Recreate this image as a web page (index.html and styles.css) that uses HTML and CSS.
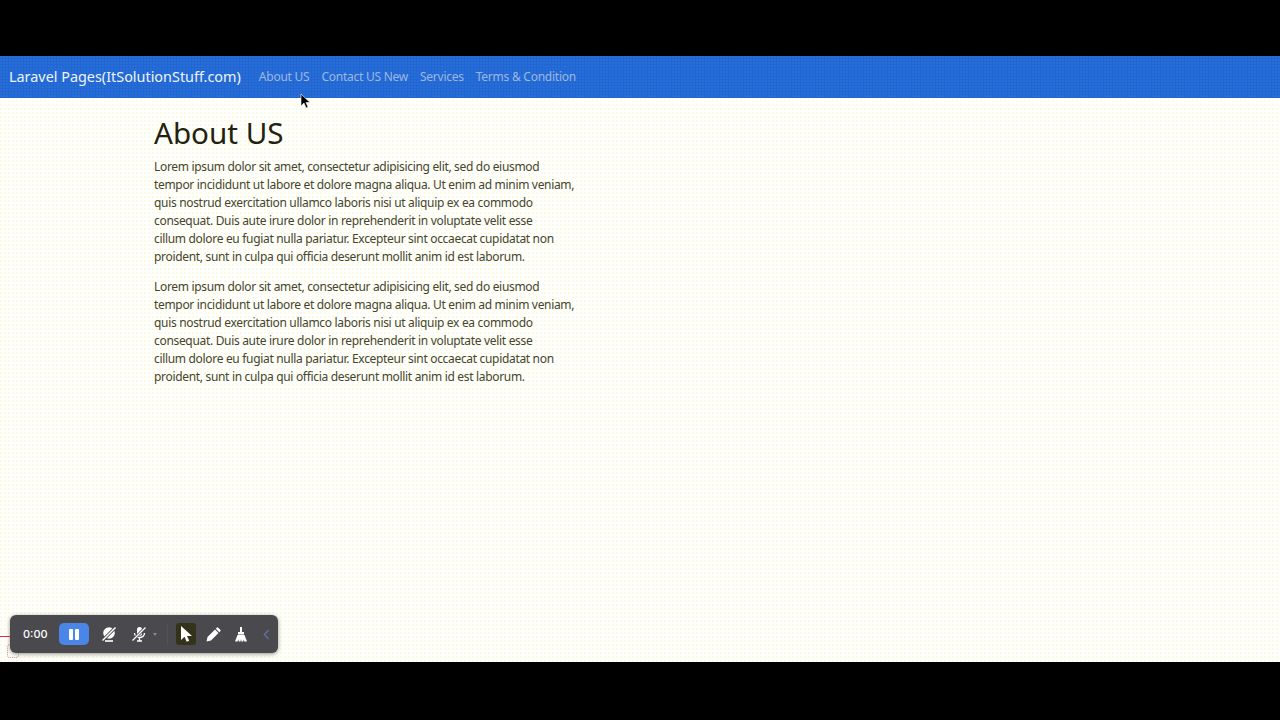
FILE: index.html
```html
<!DOCTYPE html>
<html lang="en">
<head>
  <meta charset="UTF-8" />
  <title>About US</title>
  <link rel="stylesheet" href="styles.css">
</head>
<body>
  <div class="screen">
    <nav class="navbar">
      <a class="brand" href="#">Laravel Pages(ItSolutionStuff.com)</a>
      <a class="nav-link" href="#">About US</a>
      <a class="nav-link" href="#">Contact US New</a>
      <a class="nav-link" href="#">Services</a>
      <a class="nav-link" href="#">Terms &amp; Condition</a>
    </nav>
    <svg class="cursor" width="12" height="16" viewBox="0 0 12 16">
      <path d="M1 1v12l3-3 2 5 2-1-2-4.500h4z" fill="#000" stroke="#fff" stroke-width="0.6"/>
    </svg>
    <main class="content">
      <h1>About US</h1>
      <p>Lorem ipsum dolor sit amet, consectetur adipisicing elit, sed do eiusmod<br>tempor incididunt ut labore et dolore magna aliqua. Ut enim ad minim veniam,<br>quis nostrud exercitation ullamco laboris nisi ut aliquip ex ea commodo<br>consequat. Duis aute irure dolor in reprehenderit in voluptate velit esse<br>cillum dolore eu fugiat nulla pariatur. Excepteur sint occaecat cupidatat non<br>proident, sunt in culpa qui officia deserunt mollit anim id est laborum.</p>
      <p>Lorem ipsum dolor sit amet, consectetur adipisicing elit, sed do eiusmod<br>tempor incididunt ut labore et dolore magna aliqua. Ut enim ad minim veniam,<br>quis nostrud exercitation ullamco laboris nisi ut aliquip ex ea commodo<br>consequat. Duis aute irure dolor in reprehenderit in voluptate velit esse<br>cillum dolore eu fugiat nulla pariatur. Excepteur sint occaecat cupidatat non<br>proident, sunt in culpa qui officia deserunt mollit anim id est laborum.</p>
    </main>
    <div class="rec-line"></div>
    <div class="rec-mark"></div>
    <div class="recorder">
      <span class="rec-time">0:00</span>
      <button class="rec-pause"><span></span><span></span></button>
      <svg class="rec-icon cam" width="16" height="16" viewBox="0 0 16 16">
        <circle cx="8" cy="7" r="5.800" fill="#fff"/>
        <path d="M4 15h8" stroke="#fff" stroke-width="1.600"/>
        <path d="M1 15L15 1" stroke="#4a4a4e" stroke-width="3.200"/>
        <path d="M1.500 14.500L14.500 1.500" stroke="#fff" stroke-width="1.400"/>
      </svg>
      <svg class="rec-icon mic" width="16" height="16" viewBox="0 0 16 16">
        <rect x="6" y="1" width="5" height="9" rx="2.500" fill="#fff"/>
        <path d="M3.500 7c0 6 10 6 10 0M8.500 12v3M6 15h5" fill="none" stroke="#fff" stroke-width="1.400"/>
        <path d="M1.500 14.500L14.500 1.500" stroke="#4a4a4e" stroke-width="3"/>
        <path d="M1.500 14.500L14.500 1.500" stroke="#fff" stroke-width="1.300"/>
      </svg>
      <span class="rec-caret"></span>
      <span class="rec-sep"></span>
      <span class="rec-tool active">
        <svg width="13" height="16" viewBox="0 0 13 16"><path d="M1 0v14l3.500-3.200 2.200 5 2.500-1-2.200-4.800H12z" fill="#fff"/></svg>
      </span>
      <svg class="rec-icon pen" width="15" height="15" viewBox="0 0 15 15">
        <path d="M0.500 14.500l1-4.500 7.500-7.500 3.500 3.500-7.500 7.500zM9.800 1.700l1-1a1 1 0 0 1 1.400 0l2.100 2.100a1 1 0 0 1 0 1.400l-1 1z" fill="#fff"/>
      </svg>
      <svg class="rec-icon broom" width="14" height="15" viewBox="0 0 14 15">
        <path d="M6 0h2v5H6zM4 5h6v2.500H4zM3.500 8h7l2.500 6.500h-2.500l-1-2-.200 2H7.500L7 12l-.500 2.500H4.800l-.300-2-1 2H1z" fill="#fff"/>
      </svg>
      <svg class="rec-back" width="7" height="11" viewBox="0 0 7 11">
        <path d="M5.500 1L1.500 5.500 5.500 10" fill="none" stroke="#5f6b8f" stroke-width="1.800"/>
      </svg>
    </div>
  </div>
</body>
</html>
```
FILE: styles.css
```css
html, body {
  margin: 0;
  height: 100%;
  background: #000;
  overflow: hidden;
}
.screen {
  position: relative;
  display: flex;
  flex-direction: column;
  margin-top: 56px;
  height: 606px;
  background-color: #fffffd;
  background-image: radial-gradient(circle at 1px 1px, #fbfbe6 1px, transparent 1px);
  background-size: 4px 4px;
  font-family: 'Noto Sans', sans-serif;
}
.navbar {
  display: flex;
  align-items: center;
  height: 42px;
  padding: 0 0 2px 9px;
  box-sizing: border-box;
  background-color: #1f66d8;
  background-image: radial-gradient(circle at 1px 1px, #2a6fd0 1px, transparent 1px);
  background-size: 3px 3px;
}
.navbar a {
  text-decoration: none;
}
.brand {
  color: #eef2fa;
  font-size: 14.400px;
  margin-right: 12px;
}
.nav-link {
  color: #9db7e2;
  font-size: 12px;
  letter-spacing: -0.25px;
  padding: 0 6px;
}
.cursor {
  position: absolute;
  left: 300px;
  top: 37px;
}
.content {
  padding: 18px 0 0 154px;
  color: #45452c;
}
.content h1 {
  margin: 0 0 8px;
  font-size: 29.600px;
  font-weight: 400;
  line-height: 34px;
  color: #22220f;
}
.content p {
  margin: 0 0 12px;
  font-size: 12px;
  letter-spacing: -0.32px;
  line-height: 18px;
  white-space: nowrap;
}
.rec-line {
  position: absolute;
  left: 0;
  top: 580px;
  width: 10px;
  height: 1px;
  background: #d0304a;
}
.rec-mark {
  position: absolute;
  left: 7px;
  top: 588px;
  width: 10px;
  height: 12px;
  border: 1px dotted #d98f9a;
  border-radius: 3px;
}
.recorder {
  position: absolute;
  left: 10px;
  top: 559px;
  display: flex;
  align-items: center;
  width: 268px;
  height: 38px;
  border-radius: 6px;
  background: #4a4a4e;
  box-shadow: 0 1px 4px rgba(80, 80, 60, 0.6);
  font-family: 'Inter', sans-serif;
}
.rec-time {
  margin-left: 13px;
  width: 36px;
  color: #fff;
  font-size: 11px;
  font-weight: 500;
}
.rec-pause {
  display: flex;
  align-items: center;
  justify-content: center;
  gap: 2px;
  width: 30px;
  height: 22px;
  padding: 0;
  border: 0;
  border-radius: 5px;
  background: #4a86e8;
}
.rec-pause span {
  width: 4px;
  height: 11px;
  border-radius: 1px;
  background: #fff;
}
.rec-icon.cam { margin-left: 12px; }
.rec-icon.mic { margin-left: 14px; }
.rec-caret {
  margin-left: 6px;
  border-left: 2px solid transparent;
  border-right: 2px solid transparent;
  border-top: 3px solid #8a8a8e;
}
.rec-sep {
  margin-left: 10px;
  width: 1px;
  height: 22px;
  background: #55554c;
}
.rec-tool {
  display: flex;
  align-items: center;
  justify-content: center;
  width: 20px;
  height: 22px;
  margin-left: 8px;
  border-radius: 3px;
  background: #33331c;
}
.rec-icon.pen { margin-left: 10px; }
.rec-icon.broom { margin-left: 13px; }
.rec-back { margin-left: 15px; }
```
